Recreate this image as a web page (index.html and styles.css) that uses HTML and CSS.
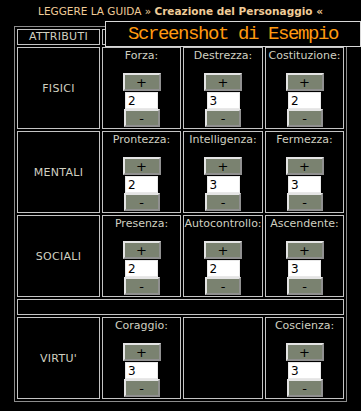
FILE: index.html
```html
<!DOCTYPE html>
<html lang="it">
<head>
    <meta charset="UTF-8">
    <meta name="viewport" content="width=device-width, initial-scale=1.0">
    <title>Creazione del Personaggio</title>
    <link rel="stylesheet" href="styles.css">
</head>
<body>
    <div class="top-nav">
        LEGGERE LA GUIDA &raquo; <b>Creazione del Personaggio &laquo;</b>
    </div>

    <div class="stamp">Screenshot di Esempio</div>

    <table class="sheet">
        <colgroup>
            <col class="col-group">
            <col class="col-stat-a">
            <col class="col-stat-b">
            <col class="col-stat-c">
        </colgroup>
        <tr class="head-row">
            <td class="head">ATTRIBUTI</td>
            <td class="head" colspan="3"></td>
        </tr>
        <tr>
            <td class="group">FISICI</td>
            <td class="stat">
                <div class="stat-name">Forza:</div>
                <div class="stepper">
                    <button class="plus">+</button>
                    <input type="text" value="2">
                    <button class="minus">-</button>
                </div>
            </td>
            <td class="stat">
                <div class="stat-name">Destrezza:</div>
                <div class="stepper">
                    <button class="plus">+</button>
                    <input type="text" value="3">
                    <button class="minus">-</button>
                </div>
            </td>
            <td class="stat">
                <div class="stat-name">Costituzione:</div>
                <div class="stepper">
                    <button class="plus">+</button>
                    <input type="text" value="2">
                    <button class="minus">-</button>
                </div>
            </td>
        </tr>
        <tr>
            <td class="group">MENTALI</td>
            <td class="stat">
                <div class="stat-name">Prontezza:</div>
                <div class="stepper">
                    <button class="plus">+</button>
                    <input type="text" value="2">
                    <button class="minus">-</button>
                </div>
            </td>
            <td class="stat">
                <div class="stat-name">Intelligenza:</div>
                <div class="stepper">
                    <button class="plus">+</button>
                    <input type="text" value="3">
                    <button class="minus">-</button>
                </div>
            </td>
            <td class="stat">
                <div class="stat-name">Fermezza:</div>
                <div class="stepper">
                    <button class="plus">+</button>
                    <input type="text" value="3">
                    <button class="minus">-</button>
                </div>
            </td>
        </tr>
        <tr>
            <td class="group">SOCIALI</td>
            <td class="stat">
                <div class="stat-name">Presenza:</div>
                <div class="stepper">
                    <button class="plus">+</button>
                    <input type="text" value="2">
                    <button class="minus">-</button>
                </div>
            </td>
            <td class="stat">
                <div class="stat-name">Autocontrollo:</div>
                <div class="stepper">
                    <button class="plus">+</button>
                    <input type="text" value="2">
                    <button class="minus">-</button>
                </div>
            </td>
            <td class="stat">
                <div class="stat-name">Ascendente:</div>
                <div class="stepper">
                    <button class="plus">+</button>
                    <input type="text" value="3">
                    <button class="minus">-</button>
                </div>
            </td>
        </tr>
        <tr class="spacer-row">
            <td colspan="4"></td>
        </tr>
        <tr>
            <td class="group">VIRTU'</td>
            <td class="stat">
                <div class="stat-name">Coraggio:</div>
                <div class="stepper">
                    <button class="plus">+</button>
                    <input type="text" value="3">
                    <button class="minus">-</button>
                </div>
            </td>
            <td class="stat"></td>
            <td class="stat">
                <div class="stat-name">Coscienza:</div>
                <div class="stepper">
                    <button class="plus">+</button>
                    <input type="text" value="3">
                    <button class="minus">-</button>
                </div>
            </td>
        </tr>
    </table>
</body>
</html>
```

FILE: styles.css
```css
body {
    margin: 0;
    background-color: #000;
    color: #d0d0c0;
    font-family: "DejaVu Sans", Verdana, sans-serif;
    font-size: 11px;
    overflow: hidden;
}

.top-nav {
    height: 23px;
    padding-top: 3px;
    line-height: 16px;
    font-size: 10.5px;
    text-align: center;
    color: #f0cc98;
}

.stamp {
    position: absolute;
    left: 105px;
    right: 0;
    top: 21px;
    height: 24px;
    line-height: 24px;
    border: 1px solid #d8d8d8;
    background-color: #000;
    color: #ff9a10;
    font-family: "Liberation Mono", "Courier New", monospace;
    font-size: 19px;
    letter-spacing: -1.4px;
    text-align: center;
}

.sheet {
    margin-left: 14px;
    width: 333px;
    table-layout: fixed;
    border: 1px solid #8c8c8c;
    border-collapse: separate;
    border-spacing: 2px;
}

.col-group {
    width: 83px;
}

.col-stat-a {
    width: 79px;
}

.col-stat-b {
    width: 80px;
}

.col-stat-c {
    width: 79px;
}

td {
    border: 1px solid #c4c4c4;
    padding: 0;
}

.head {
    height: 14px;
    line-height: 14px;
    text-align: center;
    letter-spacing: 0.3px;
}

.group {
    text-align: center;
    vertical-align: middle;
    letter-spacing: 0.3px;
}

.stat {
    vertical-align: top;
    text-align: center;
}

.stat-name {
    margin-top: 1px;
    line-height: 13px;
    white-space: nowrap;
}

.stepper {
    margin-top: 11px;
    margin-bottom: 1px;
}

.stepper button {
    display: block;
    margin: 0 auto;
    height: 18px;
    padding: 0;
    background-color: #7a8270;
    border: 2px outset #e4e4e4;
    color: #000;
    font-family: "DejaVu Sans", Verdana, sans-serif;
    font-size: 13px;
    line-height: 13px;
}

.plus {
    width: 38px;
}

.minus {
    width: 36px;
}

.stepper input {
    display: block;
    box-sizing: border-box;
    width: 33px;
    height: 17px;
    margin: 1px auto 0;
    padding: 0 2px;
    border: 1px solid #e8e8e8;
    background-color: #fff;
    color: #000;
    font-family: "DejaVu Sans", Verdana, sans-serif;
    font-size: 12px;
}

.spacer-row td {
    height: 14px;
}
```
